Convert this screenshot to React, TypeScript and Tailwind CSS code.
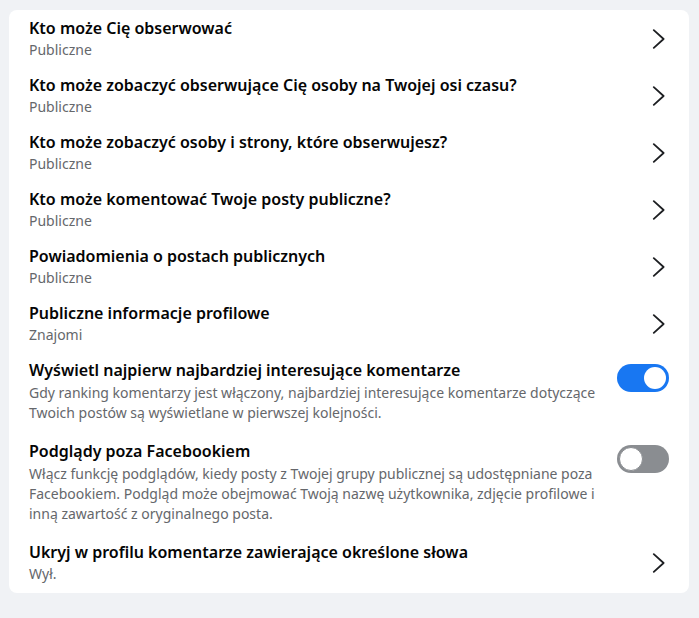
import React from "react";

type LinkRow = { kind: "link"; title: string; value: string };
type ToggleRow = { kind: "toggle"; title: string; desc: string; on: boolean };
type Row = LinkRow | ToggleRow;

const rows: Row[] = [
  { kind: "link", title: "Kto może Cię obserwować", value: "Publiczne" },
  { kind: "link", title: "Kto może zobaczyć obserwujące Cię osoby na Twojej osi czasu?", value: "Publiczne" },
  { kind: "link", title: "Kto może zobaczyć osoby i strony, które obserwujesz?", value: "Publiczne" },
  { kind: "link", title: "Kto może komentować Twoje posty publiczne?", value: "Publiczne" },
  { kind: "link", title: "Powiadomienia o postach publicznych", value: "Publiczne" },
  { kind: "link", title: "Publiczne informacje profilowe", value: "Znajomi" },
  {
    kind: "toggle",
    title: "Wyświetl najpierw najbardziej interesujące komentarze",
    desc: "Gdy ranking komentarzy jest włączony, najbardziej interesujące komentarze dotyczące Twoich postów są wyświetlane w pierwszej kolejności.",
    on: true,
  },
  {
    kind: "toggle",
    title: "Podglądy poza Facebookiem",
    desc: "Włącz funkcję podglądów, kiedy posty z Twojej grupy publicznej są udostępniane poza Facebookiem. Podgląd może obejmować Twoją nazwę użytkownika, zdjęcie profilowe i inną zawartość z oryginalnego posta.",
    on: false,
  },
  { kind: "link", title: "Ukryj w profilu komentarze zawierające określone słowa", value: "Wył." },
];

function Chevron() {
  return (
    <svg viewBox="0 0 20 20" className="h-5 w-5 text-[#1c1e21]" fill="none">
      <path d="M4.8 1.2 14.6 10l-9.8 8.8" stroke="currentColor" strokeWidth="1.8" strokeLinecap="round" strokeLinejoin="round" />
    </svg>
  );
}

function Switch({ on }: { on: boolean }) {
  return (
    <div
      className={
        on
          ? "mt-1 flex h-[28px] w-[52px] shrink-0 items-center justify-end rounded-full bg-[#1877f2] px-[3px]"
          : "mt-1 flex h-[28px] w-[52px] shrink-0 items-center justify-start rounded-full bg-[#8a8d91] px-[2px]"
      }
    >
      <div
        className={
          on
            ? "h-[22px] w-[22px] rounded-full bg-white"
            : "h-[24px] w-[24px] rounded-full border border-[#8a8d91] bg-white"
        }
      />
    </div>
  );
}

export default function App() {
  return (
    <div className="min-h-[618px] bg-[#f0f2f5] pl-[9px] pr-[10px] pt-[10px] font-['Noto_Sans',sans-serif]">
      <div className="rounded-lg bg-white pb-[2px]">
        {rows.map((r) =>
          r.kind === "link" ? (
            <div key={r.title} className="flex items-center gap-3 px-5 pb-[7px] pt-2">
              <div className="min-w-0 flex-1">
                <div className="text-[16px] font-semibold leading-[21px] text-[#050505]">{r.title}</div>
                <div className="mt-px text-[14px] leading-5 text-[#65676b]">{r.value}</div>
              </div>
              <Chevron />
            </div>
          ) : (
            <div key={r.title} className="flex items-start gap-3 px-5 pb-2.5 pt-2">
              <div className="min-w-0 flex-1">
                <div className="text-[16px] font-semibold leading-[21px] text-[#050505]">{r.title}</div>
                <div className="mt-0.5 text-[14px] leading-5 text-[#65676b]">{r.desc}</div>
              </div>
              <Switch on={r.on} />
            </div>
          )
        )}
      </div>
    </div>
  );
}
